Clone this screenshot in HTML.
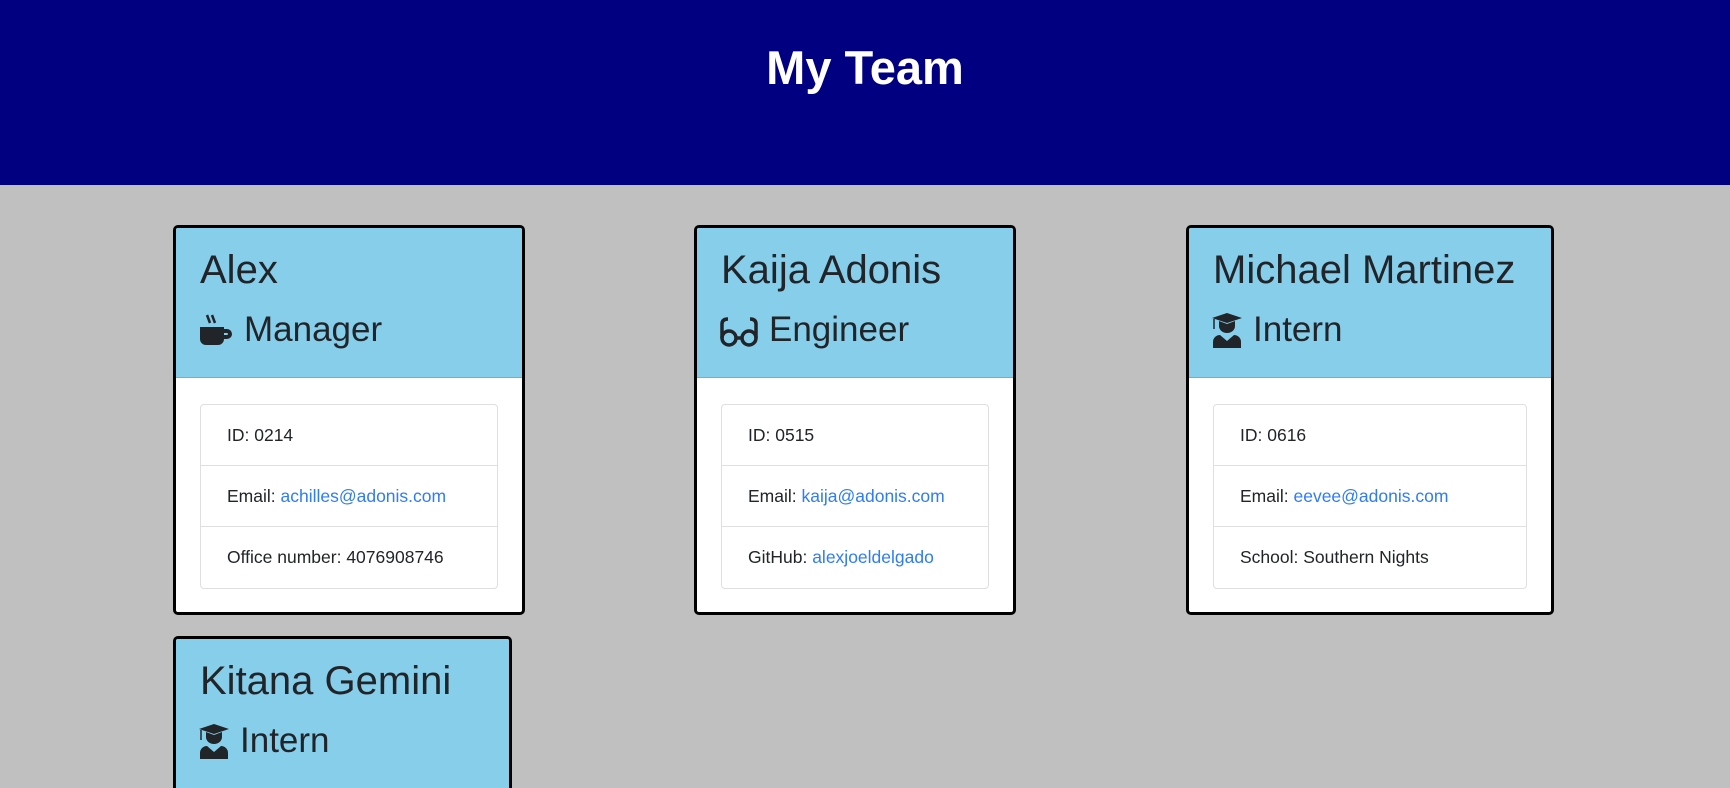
<!DOCTYPE html>
<html><head><meta charset="utf-8"><style>
*{box-sizing:border-box;margin:0;padding:0}
html,body{width:1730px;height:788px;overflow:hidden}
body{background:#c0c0c0;font-family:"Liberation Sans",sans-serif;color:#212529;position:relative}
.top{position:absolute;left:0;top:0;width:1730px;height:185px;background:#000080}
.top h1{position:absolute;left:0;width:1730px;top:38px;text-align:center;color:#fff;font-size:47px;font-weight:bold;line-height:60px}
.card{position:absolute;border:3px solid #000;border-radius:5px;background:#fff;overflow:hidden}
.hd{position:absolute;left:0;top:0;right:0;height:150px;background:#87ceeb;border-bottom:1px solid #6bb3cf}
.name{position:absolute;left:24px;top:17px;font-size:40px;line-height:50px;white-space:nowrap}
.role{position:absolute;left:22px;top:80px;font-size:35px;line-height:44px;white-space:nowrap;display:flex;align-items:center}
.role svg{margin-right:10px}
.list{position:absolute;left:24px;top:176px;right:24px;height:185px;border:1px solid #dfdfdf;border-radius:4px}
.row{height:61px;border-bottom:1px solid #dfdfdf;font-size:17.5px;line-height:60px;padding-left:26px;white-space:nowrap}
.row:last-child{border-bottom:none}
a{color:#2f7cf6;text-decoration:none}
</style></head><body>
<div class="top"><h1>My Team</h1></div>

<div class="card" style="left:173px;top:225px;width:352px;height:390px">
 <div class="hd"><div class="name">Alex</div>
 <div class="role"><svg width="36" height="36" viewBox="0 0 36 36"><path d="M2 15h24v12a6 6 0 0 1-6 6H8a6 6 0 0 1-6-6z" fill="#212529"/><path d="M26 17h3a5 5 0 0 1 0 10h-3v-4h3a1 1 0 0 0 0-2h-3z" fill="#212529"/><path d="M9 3l3 8M14 3l3 8" stroke="#212529" stroke-width="2.5"/></svg>Manager</div></div>
 <div class="list"><div class="row">ID: 0214</div><div class="row">Email: <a>achilles@adonis.com</a></div><div class="row">Office number: 4076908746</div></div>
</div>

<div class="card" style="left:694px;top:225px;width:322px;height:390px">
 <div class="hd"><div class="name">Kaija Adonis</div>
 <div class="role"><svg width="40" height="36" viewBox="0 0 40 36"><g fill="none" stroke="#212529" stroke-width="3.5"><circle cx="10" cy="26" r="7"/><circle cx="30" cy="26" r="7"/><path d="M17 26h6M3 26V12q0-5 6-5M37 26V12q0-5-6-5"/></g></svg>Engineer</div></div>
 <div class="list"><div class="row">ID: 0515</div><div class="row">Email: <a>kaija@adonis.com</a></div><div class="row">GitHub: <a>alexjoeldelgado</a></div></div>
</div>

<div class="card" style="left:1186px;top:225px;width:368px;height:390px">
 <div class="hd"><div class="name">Michael Martinez</div>
 <div class="role"><svg width="32" height="36" viewBox="0 0 32 36"><path d="M16 1L31 6L16 11L1 6z" fill="#212529"/><path d="M8 9v5a8 7 0 0 0 16 0V9l-8 3z" fill="#212529"/><path d="M3 7v10" stroke="#212529" stroke-width="1.5"/><path d="M2 36v-6a7 7 0 0 1 7-7l7 6l7-6a7 7 0 0 1 7 7v6z" fill="#212529"/></svg>Intern</div></div>
 <div class="list"><div class="row">ID: 0616</div><div class="row">Email: <a>eevee@adonis.com</a></div><div class="row">School: Southern Nights</div></div>
</div>

<div class="card" style="left:173px;top:636px;width:339px;height:170px;border-bottom:none">
 <div class="hd" style="height:170px;border-bottom:none"><div class="name">Kitana Gemini</div>
 <div class="role"><svg width="32" height="36" viewBox="0 0 32 36"><path d="M16 1L31 6L16 11L1 6z" fill="#212529"/><path d="M8 9v5a8 7 0 0 0 16 0V9l-8 3z" fill="#212529"/><path d="M3 7v10" stroke="#212529" stroke-width="1.5"/><path d="M2 36v-6a7 7 0 0 1 7-7l7 6l7-6a7 7 0 0 1 7 7v6z" fill="#212529"/></svg>Intern</div></div>
</div>
</body></html>
